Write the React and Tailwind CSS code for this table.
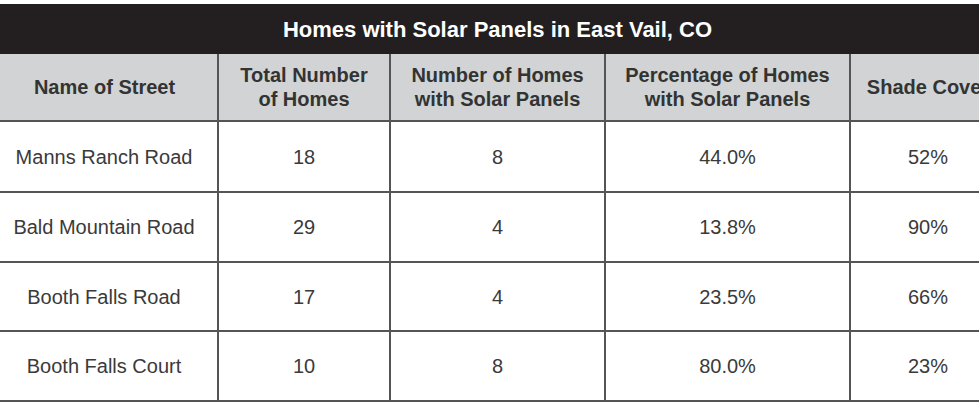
import React from 'react';

const headers = [
  ['Name of Street'],
  ['Total Number', 'of Homes'],
  ['Number of Homes', 'with Solar Panels'],
  ['Percentage of Homes', 'with Solar Panels'],
  ['Shade Cover'],
];

const rows = [
  { street: 'Manns Ranch Road', total: '18', solar: '8', pct: '44.0%', shade: '52%', h: 'h-[69px]' },
  { street: 'Bald Mountain Road', total: '29', solar: '4', pct: '13.8%', shade: '90%', h: 'h-[68px]' },
  { street: 'Booth Falls Road', total: '17', solar: '4', pct: '23.5%', shade: '66%', h: 'h-[67px]' },
  { street: 'Booth Falls Court', total: '10', solar: '8', pct: '80.0%', shade: '23%', h: 'h-[68px]' },
];

const cols = 'grid grid-cols-[217px_170px_213px_243px_154px] gap-x-[2px]';

export default function App() {
  return (
    <div
      className="w-[979px] h-[402px] overflow-hidden bg-white pt-1"
      style={{ fontFamily: '"Liberation Sans", Arial, sans-serif' }}
    >
      <div className="w-[1005px]">
        {/* Title */}
        <div className="flex h-[50px] items-center justify-center bg-[#231f20] pr-[10px] text-[22px] font-bold text-white">
          Homes with Solar Panels in East Vail, CO
        </div>

        {/* Grid body, lines are the gaps */}
        <div className="flex flex-col gap-y-[2px] bg-[#555555] pb-[2px]">
          <div className={`${cols} h-[66px]`}>
            {headers.map((lines, i) => (
              <div
                key={i}
                className={`flex flex-col items-center justify-center whitespace-nowrap bg-[#d1d3d4] text-[20px] font-bold leading-[24px] text-[#333333] ${i === 0 ? 'pr-[8px]' : ''}`}
              >
                {lines.map((l) => (
                  <span key={l}>{l}</span>
                ))}
              </div>
            ))}
          </div>

          {rows.map((r) => (
            <div key={r.street} className={`${cols} ${r.h}`}>
              {[r.street, r.total, r.solar, r.pct, r.shade].map((v, i) => (
                <div
                  key={i}
                  className={`flex items-center justify-center bg-white text-[20px] text-[#3a3a3a] ${i === 0 ? 'pr-[9px]' : ''}`}
                >
                  {v}
                </div>
              ))}
            </div>
          ))}
        </div>
      </div>
    </div>
  );
}
